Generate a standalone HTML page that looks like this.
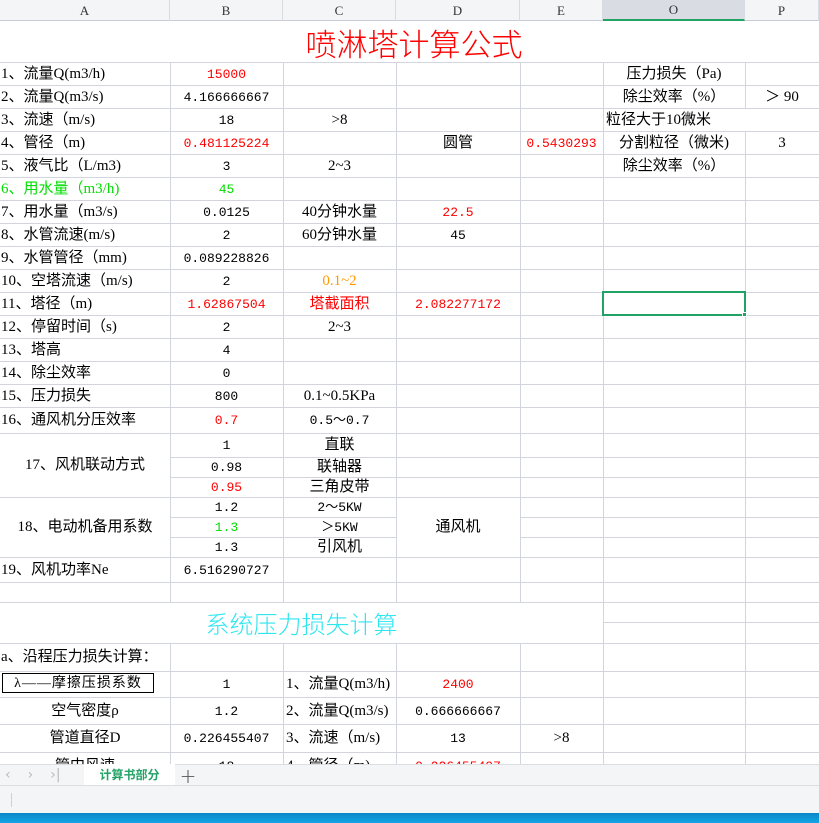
<!DOCTYPE html>
<html><head><meta charset="utf-8"><style>
*{margin:0;padding:0;box-sizing:border-box}
body{width:819px;height:823px;overflow:hidden;background:#fff;font-family:"Liberation Serif","Noto Sans CJK SC",serif;font-size:15px;color:#000;position:relative}
.h{position:absolute;left:0;width:819px;height:1px;background:#d2d5de}
.v{position:absolute;width:1px;background:#d2d5de}
.w{position:absolute;background:#fff}
.t{position:absolute;display:flex;align-items:center;justify-content:center;white-space:nowrap;line-height:1;padding-top:1px}
.l{justify-content:flex-start;padding-left:1px}
.n{font-family:"Liberation Mono","Noto Sans CJK SC",monospace;font-size:13px}
.r{color:#f00}.g{color:#00dd00}.o{color:#f90}
#sheet{position:absolute;left:0;top:0;width:819px;height:764px;overflow:hidden}
.hd{position:absolute;top:0;height:21px;display:flex;align-items:center;justify-content:center;font-size:13px;color:#333;border-right:1px solid #d8dbe2}
</style></head><body>
<div id="sheet">
<div style="position:absolute;left:0;top:0;width:819px;height:21px;background:#f4f5f7;border-bottom:1px solid #c8ccd6"></div>
<div class="hd" style="left:0;width:170px">A</div>
<div class="hd" style="left:170px;width:113px">B</div>
<div class="hd" style="left:283px;width:113px">C</div>
<div class="hd" style="left:396px;width:124px">D</div>
<div class="hd" style="left:520px;width:83px">E</div>
<div class="hd" style="left:603px;width:142px;background:#d9dce3;border-bottom:2px solid #21a366">O</div>
<div class="hd" style="left:745px;width:74px">P</div>

<div class="v" style="left:170px;top:62px;height:702px"></div>
<div class="v" style="left:283px;top:62px;height:702px"></div>
<div class="v" style="left:396px;top:62px;height:702px"></div>
<div class="v" style="left:520px;top:62px;height:702px"></div>
<div class="v" style="left:603px;top:62px;height:702px"></div>
<div class="v" style="left:745px;top:62px;height:702px"></div>
<div class="h" style="top:62px"></div><div class="h" style="top:85px"></div><div class="h" style="top:108px"></div><div class="h" style="top:131px"></div><div class="h" style="top:154px"></div><div class="h" style="top:177px"></div><div class="h" style="top:200px"></div><div class="h" style="top:223px"></div><div class="h" style="top:246px"></div><div class="h" style="top:269px"></div><div class="h" style="top:292px"></div><div class="h" style="top:315px"></div><div class="h" style="top:338px"></div><div class="h" style="top:361px"></div><div class="h" style="top:384px"></div><div class="h" style="top:407px"></div><div class="h" style="top:433px"></div><div class="h" style="top:457px"></div><div class="h" style="top:477px"></div><div class="h" style="top:497px"></div><div class="h" style="top:517px"></div><div class="h" style="top:537px"></div><div class="h" style="top:557px"></div><div class="h" style="top:582px"></div><div class="h" style="top:602px"></div><div class="h" style="top:622px;left:603px;width:216px"></div><div class="h" style="top:643px"></div><div class="h" style="top:671px"></div><div class="h" style="top:697px"></div><div class="h" style="top:724px"></div><div class="h" style="top:752px"></div>
<div class="w" style="left:0;top:434px;width:170px;height:63px"></div>
<div class="w" style="left:0;top:498px;width:170px;height:59px"></div>
<div class="w" style="left:397px;top:498px;width:123px;height:59px"></div>
<div class="w" style="left:0;top:603px;width:603px;height:40px"></div>
<div class="w" style="left:604px;top:109px;width:215px;height:22px"></div>
<div class="v" style="left:603px;top:108px;height:23px"></div>

<div class="t" style="left:0;top:21px;width:828px;height:41px;font-family:'Noto Sans CJK SC',sans-serif;font-size:31px;color:#f00;font-weight:300">喷淋塔计算公式</div>

<div class="t l" style="left:0;top:62px;height:23px">1、流量Q(m3/h)</div><div class="t n r" style="left:170px;top:62px;width:113px;height:23px">15000</div><div class="t" style="left:603px;top:62px;width:142px;height:23px">压力损失（Pa)</div>
<div class="t l" style="left:0;top:85px;height:23px">2、流量Q(m3/s)</div><div class="t n" style="left:170px;top:85px;width:113px;height:23px">4.166666667</div><div class="t" style="left:603px;top:85px;width:142px;height:23px">除尘效率（%）</div><div class="t" style="left:745px;top:85px;width:74px;height:23px">＞ 90</div>
<div class="t l" style="left:0;top:108px;height:23px">3、流速（m/s)</div><div class="t n" style="left:170px;top:108px;width:113px;height:23px">18</div><div class="t" style="left:283px;top:108px;width:113px;height:23px">&gt;8</div><div class="t l" style="left:605px;top:108px;height:23px">粒径大于10微米</div>
<div class="t l" style="left:0;top:131px;height:23px">4、管径（m)</div><div class="t n r" style="left:170px;top:131px;width:113px;height:23px">0.481125224</div><div class="t" style="left:396px;top:131px;width:124px;height:23px">圆管</div><div class="t n r" style="left:520px;top:131px;width:83px;height:23px">0.5430293</div><div class="t" style="left:603px;top:131px;width:142px;height:23px">分割粒径（微米)</div><div class="t" style="left:745px;top:131px;width:74px;height:23px">3</div>
<div class="t l" style="left:0;top:154px;height:23px">5、液气比（L/m3)</div><div class="t n" style="left:170px;top:154px;width:113px;height:23px">3</div><div class="t" style="left:283px;top:154px;width:113px;height:23px">2~3</div><div class="t" style="left:603px;top:154px;width:142px;height:23px">除尘效率（%）</div>
<div class="t l g" style="left:0;top:177px;height:23px">6、用水量（m3/h)</div><div class="t n g" style="left:170px;top:177px;width:113px;height:23px">45</div>
<div class="t l" style="left:0;top:200px;height:23px">7、用水量（m3/s)</div><div class="t n" style="left:170px;top:200px;width:113px;height:23px">0.0125</div><div class="t" style="left:283px;top:200px;width:113px;height:23px">40分钟水量</div><div class="t n r" style="left:396px;top:200px;width:124px;height:23px">22.5</div>
<div class="t l" style="left:0;top:223px;height:23px">8、水管流速(m/s)</div><div class="t n" style="left:170px;top:223px;width:113px;height:23px">2</div><div class="t" style="left:283px;top:223px;width:113px;height:23px">60分钟水量</div><div class="t n" style="left:396px;top:223px;width:124px;height:23px">45</div>
<div class="t l" style="left:0;top:246px;height:23px">9、水管管径（mm)</div><div class="t n" style="left:170px;top:246px;width:113px;height:23px">0.089228826</div>
<div class="t l" style="left:0;top:269px;height:23px">10、空塔流速（m/s)</div><div class="t n" style="left:170px;top:269px;width:113px;height:23px">2</div><div class="t o" style="left:283px;top:269px;width:113px;height:23px">0.1~2</div>
<div class="t l" style="left:0;top:292px;height:23px">11、塔径（m)</div><div class="t n r" style="left:170px;top:292px;width:113px;height:23px">1.62867504</div><div class="t r" style="left:283px;top:292px;width:113px;height:23px">塔截面积</div><div class="t n r" style="left:396px;top:292px;width:124px;height:23px">2.082277172</div>
<div style="position:absolute;left:602px;top:291px;width:144px;height:25px;border:2px solid #21a366"></div><div style="position:absolute;left:742px;top:312px;width:5px;height:5px;background:#21a366;border:1px solid #fff"></div>
<div class="t l" style="left:0;top:315px;height:23px">12、停留时间（s)</div><div class="t n" style="left:170px;top:315px;width:113px;height:23px">2</div><div class="t" style="left:283px;top:315px;width:113px;height:23px">2~3</div>
<div class="t l" style="left:0;top:338px;height:23px">13、塔高</div><div class="t n" style="left:170px;top:338px;width:113px;height:23px">4</div>
<div class="t l" style="left:0;top:361px;height:23px">14、除尘效率</div><div class="t n" style="left:170px;top:361px;width:113px;height:23px">0</div>
<div class="t l" style="left:0;top:384px;height:23px">15、压力损失</div><div class="t n" style="left:170px;top:384px;width:113px;height:23px">800</div><div class="t" style="left:283px;top:384px;width:113px;height:23px">0.1~0.5KPa</div>
<div class="t l" style="left:0;top:407px;height:26px">16、通风机分压效率</div><div class="t n r" style="left:170px;top:407px;width:113px;height:26px">0.7</div><div class="t n" style="left:283px;top:407px;width:113px;height:26px">0.5～0.7</div>
<div class="t" style="left:0;top:433px;width:170px;height:64px">17、风机联动方式</div>
<div class="t n" style="left:170px;top:433px;width:113px;height:24px">1</div><div class="t" style="left:283px;top:433px;width:113px;height:24px">直联</div>
<div class="t n" style="left:170px;top:457px;width:113px;height:20px">0.98</div><div class="t" style="left:283px;top:457px;width:113px;height:20px">联轴器</div>
<div class="t n r" style="left:170px;top:477px;width:113px;height:20px">0.95</div><div class="t" style="left:283px;top:477px;width:113px;height:20px">三角皮带</div>
<div class="t" style="left:0;top:497px;width:170px;height:60px">18、电动机备用系数</div>
<div class="t n" style="left:170px;top:497px;width:113px;height:20px">1.2</div><div class="t n" style="left:283px;top:497px;width:113px;height:20px">2～5KW</div>
<div class="t n g" style="left:170px;top:517px;width:113px;height:20px">1.3</div><div class="t n" style="left:283px;top:517px;width:113px;height:20px">＞5KW</div>
<div class="t n" style="left:170px;top:537px;width:113px;height:20px">1.3</div><div class="t" style="left:283px;top:537px;width:113px;height:20px">引风机</div>
<div class="t" style="left:396px;top:497px;width:124px;height:60px">通风机</div>
<div class="t l" style="left:0;top:557px;height:25px">19、风机功率Ne</div><div class="t n" style="left:170px;top:557px;width:113px;height:25px">6.516290727</div>

<div class="t" style="left:0;top:602px;width:603px;height:41px;font-family:'Noto Sans CJK SC',sans-serif;font-size:24px;color:#2ee6f0;font-weight:300">系统压力损失计算</div>
<div class="t l" style="left:0;top:643px;height:28px">a、沿程压力损失计算：</div>
<div class="t" style="left:2px;top:673px;width:152px;height:20px;border:1.5px solid #000;font-size:14px;letter-spacing:1px">λ——摩擦压损系数</div>
<div class="t n" style="left:170px;top:671px;width:113px;height:26px">1</div><div class="t l" style="left:285px;top:671px;height:26px">1、流量Q(m3/h)</div><div class="t n r" style="left:396px;top:671px;width:124px;height:26px">2400</div>
<div class="t" style="left:0;top:697px;width:170px;height:27px">空气密度ρ</div><div class="t n" style="left:170px;top:697px;width:113px;height:27px">1.2</div><div class="t l" style="left:285px;top:697px;height:27px">2、流量Q(m3/s)</div><div class="t n" style="left:396px;top:697px;width:124px;height:27px">0.666666667</div>
<div class="t" style="left:0;top:724px;width:170px;height:28px">管道直径D</div><div class="t n" style="left:170px;top:724px;width:113px;height:28px">0.226455407</div><div class="t l" style="left:285px;top:724px;height:28px">3、流速（m/s)</div><div class="t n" style="left:396px;top:724px;width:124px;height:28px">13</div><div class="t" style="left:520px;top:724px;width:83px;height:28px">&gt;8</div>
<div class="t" style="left:0;top:752px;width:170px;height:28px">管中风速</div><div class="t n" style="left:170px;top:752px;width:113px;height:28px">18</div><div class="t l" style="left:285px;top:752px;height:28px">4、管径（m)</div><div class="t n r" style="left:396px;top:752px;width:124px;height:28px">0.226455407</div>
</div>

<div style="position:absolute;left:0;top:764px;width:819px;height:22px;background:#f4f5f7;border-top:1px solid #dcdee4;border-bottom:1px solid #dcdee4"></div>
<div style="position:absolute;left:5px;top:764px;height:22px;display:flex;align-items:center;color:#bbb;font-family:'DejaVu Sans',sans-serif;font-size:14px;gap:17px"><span>‹</span><span>›</span><span>›|</span></div>
<div class="t" style="left:84px;top:764px;width:91px;height:21px;background:#fff;color:#21a366;font-family:'Noto Sans CJK SC',sans-serif;font-weight:bold;font-size:12px">计算书部分</div>
<div class="t" style="left:178px;top:764px;width:20px;height:22px;color:#555;font-size:20px;font-family:'DejaVu Sans',sans-serif;font-weight:200">+</div>
<div style="position:absolute;left:0;top:786px;width:819px;height:27px;background:#f4f5f7"></div>
<div style="position:absolute;left:11px;top:793px;width:1px;height:14px;background:#d0d0d0"></div>
<div style="position:absolute;left:0;top:813px;width:819px;height:10px;background:linear-gradient(#0a86c8,#12a6e6)"></div>
</body></html>
